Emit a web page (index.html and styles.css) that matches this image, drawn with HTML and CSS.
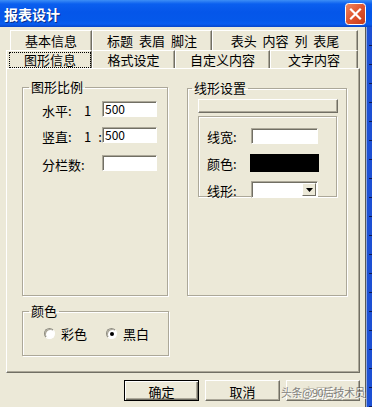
FILE: index.html
```html
<!DOCTYPE html>
<html>
<head>
<meta charset="utf-8">
<link rel="stylesheet" href="styles.css">
</head>
<body>
<div class="window">
  <div class="titlebar">
    <span class="title">报表设计</span>
    <div class="close">
      <svg width="21" height="22" viewBox="0 0 21 22">
        <defs>
          <linearGradient id="cg" x1="0" y1="0" x2="1" y2="1">
            <stop offset="0" stop-color="#F08A64"/>
            <stop offset="0.5" stop-color="#E0542E"/>
            <stop offset="1" stop-color="#C73A17"/>
          </linearGradient>
        </defs>
        <rect x="0.5" y="0.5" width="20" height="21" rx="3" ry="3" fill="url(#cg)" stroke="#fff" stroke-width="1"/>
        <path d="M6 6.5 L15 15.5 M15 6.5 L6 15.5" stroke="#fff" stroke-width="2.2" stroke-linecap="square"/>
      </svg>
    </div>
  </div>
  <div class="frame-row">
    <div class="body">
      <div class="tabs">
        <div class="tabrow row1">
          <div class="tab w82">基本信息</div>
          <div class="tab w120">标题 表眉 脚注</div>
          <div class="tab w146">表头 内容 列 表尾</div>
        </div>
        <div class="tabrow row2">
          <div class="tab sel w86"><span class="focus">图形信息</span></div>
          <div class="tab w83">格式设定</div>
          <div class="tab w95">自定义内容</div>
          <div class="tab w88">文字内容</div>
        </div>
      </div>
      <div class="panel">
        <div class="cols">
          <fieldset class="group g1">
            <legend>图形比例</legend>
            <div class="frow">
              <span class="lbl">水平:</span><span class="one">1</span><div class="input">500</div>
            </div>
            <div class="frow r2">
              <span class="lbl">竖直:</span><span class="one">1 <i>:</i></span><div class="input">500</div>
            </div>
            <div class="frow r3">
              <span class="lbl">分栏数:</span><span class="one"></span><div class="input"></div>
            </div>
          </fieldset>
          <fieldset class="group g2">
            <legend>线形设置</legend>
            <div class="hbtn"></div>
            <div class="inner">
              <div class="irow">
                <span class="ilbl">线宽:</span><div class="input wide"></div>
              </div>
              <div class="irow">
                <span class="ilbl">颜色:</span><div class="swatch"></div>
              </div>
              <div class="irow">
                <span class="ilbl">线形:</span>
                <div class="combo">
                  <div class="arrow">
                    <svg width="7" height="4" viewBox="0 0 7 4"><path d="M0 0 H7 L3.5 4 Z" fill="#000"/></svg>
                  </div>
                </div>
              </div>
            </div>
          </fieldset>
        </div>
        <fieldset class="group g3">
          <legend>颜色</legend>
          <div class="radios">
            <label class="radio"><span class="dot"></span>彩色</label>
            <label class="radio on"><span class="dot"></span>黑白</label>
          </div>
        </fieldset>
      </div>
      <div class="buttons">
        <div class="btn default">确定</div>
        <div class="btn">取消</div>
        <div class="btn disabled">应用(A)</div>
      </div>
      <div class="watermark">头条@90后技术员</div>
    </div>
    <div class="rframe"></div>
  </div>
</div>
</body>
</html>
```
FILE: styles.css
```css
* { box-sizing: border-box; }
html, body {
  margin: 0;
  padding: 0;
  width: 372px;
  height: 407px;
  overflow: hidden;
  background: #ECE9D8;
  font-family: "Noto Sans CJK SC", "Liberation Sans", sans-serif;
  font-size: 12px;
  color: #000;
}
.window {
  width: 372px;
  height: 407px;
  display: flex;
  flex-direction: column;
}
.titlebar {
  height: 27px;
  flex: none;
  display: flex;
  align-items: center;
  justify-content: space-between;
  padding: 0 6px 0 4px;
  background: linear-gradient(to bottom, #3D8EF6 0px, #0B5FEF 4px, #0556E9 12px, #0558EA 20px, #0A5DF0 24px, #0846C9 27px);
}
.title {
  color: #fff;
  font-weight: bold;
  font-size: 14px;
  text-shadow: 1px 1px 0 #0A2F8A;
  line-height: 16px;
}
.close {
  width: 21px;
  height: 22px;
  display: flex;
}
.frame-row {
  flex: 1;
  display: flex;
}
.body {
  width: 365px;
  position: relative;
  background: #ECE9D8;
  padding-top: 3px;
}
.rframe {
  width: 7px;
  border-left: 1px solid #5B5A55;
  background:
    repeating-linear-gradient(to bottom, transparent 0, transparent 18px, #0B1A55 18px, #0B1A55 19px) right 0 top 0 / 3px 100% no-repeat,
    linear-gradient(to right, #8FA6D8 0, #8FA6D8 1px, #1D50D4 1px);
}
.tabs {
  margin-left: 6px;
}
.tabrow {
  display: flex;
}
.row1 {
  height: 20px;
  padding-left: 4px;
}
.row2 {
  height: 18px;
}
.tab {
  height: 100%;
  display: flex;
  align-items: center;
  justify-content: center;
  border-top: 1px solid #fff;
  border-left: 1px solid #fff;
  border-right: 1px solid #716F64;
  box-shadow: inset -1px 0 0 #ACA899;
  white-space: pre;
  line-height: 14px;
  padding-top: 1px;
  font-size: 13px;
  word-spacing: 3px;
}
.w82 { width: 82px; }
.w120 { width: 120px; }
.w146 { width: 146px; }
.w86 { width: 86px; }
.w83 { width: 83px; }
.w95 { width: 95px; }
.w88 { width: 88px; }
.tab.sel {
  padding: 1px 0 0 2px;
}
.focus {
  display: flex;
  align-items: center;
  justify-content: center;
  width: 82px;
  height: 16px;
  border: 1px dotted #000;
}
.panel {
  margin-left: 6px;
  width: 354px;
  height: 305px;
  border-top: 1px solid #fff;
  border-left: 1px solid #fff;
  border-right: 1px solid #716F64;
  border-bottom: 1px solid #716F64;
  box-shadow: inset -1px -1px 0 #ACA899;
  padding: 11px 0 0 15px;
}
.cols {
  display: flex;
  align-items: flex-start;
}
.group {
  margin: 0;
  padding: 0;
  min-width: 0;
  border: 1px solid #ACA899;
  box-shadow: 1px 1px 0 #fff, inset 1px 1px 0 #fff;
}
.group legend {
  padding: 0 2px;
  margin-left: 6px;
  line-height: 14px;
  font-size: 13px;
}
.g1 {
  width: 146px;
  height: 216px;
}
.g2 {
  width: 160px;
  height: 215px;
  margin-left: 19px;
  margin-top: 1px;
}
.g2 legend { margin-left: 4px; }
.g3 {
  width: 147px;
  height: 52px;
  margin-top: 8px;
}
.frow {
  display: flex;
  align-items: center;
  height: 16px;
  margin-top: 7px;
  padding-left: 19px;
  font-size: 13px;
}
.frow.r2 { margin-top: 10px; }
.frow.r3 { margin-top: 12px; }
.lbl {
  width: 42px;
  white-space: nowrap;
  padding-top: 3px;
}
.one {
  width: 18px;
  white-space: pre;
  padding-top: 3px;
}
.one i {
  font-style: normal;
  margin-left: 4px;
}
.input {
  width: 55px;
  height: 16px;
  background: #fff;
  border-top: 1px solid #ACA899;
  border-left: 1px solid #ACA899;
  border-right: 1px solid #fff;
  border-bottom: 1px solid #fff;
  box-shadow: inset 1px 1px 0 #716F64;
  font-size: 12px;
  line-height: 14px;
  padding-left: 2px;
}
.hbtn {
  margin: 4px 0 0 10px;
  width: 140px;
  height: 14px;
  border-top: 1px solid #fff;
  border-left: 1px solid #fff;
  border-right: 1px solid #716F64;
  border-bottom: 1px solid #716F64;
  box-shadow: inset -1px -1px 0 #ACA899;
}
.inner {
  margin: 3px 0 0 10px;
  width: 139px;
  height: 81px;
  border: 1px solid #ACA899;
  box-shadow: 1px 1px 0 #fff, inset 1px 1px 0 #fff;
  padding: 8px 0 0 8px;
  display: flex;
  flex-direction: column;
  gap: 6px;
}
.irow {
  display: flex;
  align-items: center;
  font-size: 13px;
}
.ilbl {
  width: 44px;
  white-space: nowrap;
  padding-top: 2px;
}
.input.wide {
  width: 67px;
}
.swatch {
  width: 69px;
  height: 18px;
  margin-left: -1px;
  background: #000;
}
.combo {
  width: 67px;
  height: 17px;
  background: #fff;
  border-top: 1px solid #ACA899;
  border-left: 1px solid #ACA899;
  border-right: 1px solid #fff;
  border-bottom: 1px solid #fff;
  box-shadow: inset 1px 1px 0 #716F64;
  display: flex;
  justify-content: flex-end;
  padding: 1px 1px 0 0;
}
.arrow {
  width: 14px;
  height: 13px;
  background: #ECE9D8;
  border-top: 1px solid #fff;
  border-left: 1px solid #fff;
  border-right: 1px solid #716F64;
  border-bottom: 1px solid #716F64;
  display: flex;
  align-items: center;
  justify-content: center;
}
.radios {
  display: flex;
  align-items: center;
  padding: 6px 0 0 21px;
  font-size: 13px;
}
.radio {
  display: flex;
  align-items: center;
  gap: 6px;
}
.radio + .radio {
  margin-left: 19px;
}
.dot {
  width: 11px;
  height: 11px;
  border-radius: 50%;
  background: #fff;
  border: 1px solid;
  border-color: #8E8C80 #fff #fff #8E8C80;
  box-shadow: inset 1px 1px 0 #ACA899;
  display: flex;
  align-items: center;
  justify-content: center;
}
.radio.on .dot::after {
  content: "";
  width: 4px;
  height: 4px;
  border-radius: 50%;
  background: #000;
}
.buttons {
  display: flex;
  gap: 6px;
  margin: 7px 0 0 124px;
}
.btn {
  width: 75px;
  height: 21px;
  flex: none;
  display: flex;
  align-items: center;
  justify-content: center;
  border-top: 1px solid #fff;
  border-left: 1px solid #fff;
  border-right: 1px solid #716F64;
  border-bottom: 1px solid #716F64;
  box-shadow: inset -1px -1px 0 #ACA899;
  font-size: 13px;
  padding-top: 1px;
}
.btn.default {
  border: 1px solid #000;
  box-shadow: inset 1px 1px 0 #fff, inset -1px -1px 0 #716F64, inset -2px -2px 0 #ACA899;
}
.btn.disabled {
  width: 74px;
  color: #C5C2B2;
  text-shadow: 1px 1px 0 #fff;
}
.watermark {
  position: absolute;
  left: 281px;
  top: 359px;
  font-size: 11px;
  line-height: 13px;
  color: rgba(80, 80, 80, 0.7);
  text-shadow: 1px 1px 0 rgba(255,255,255,0.8);
  white-space: nowrap;
  letter-spacing: -0.5px;
}
```
